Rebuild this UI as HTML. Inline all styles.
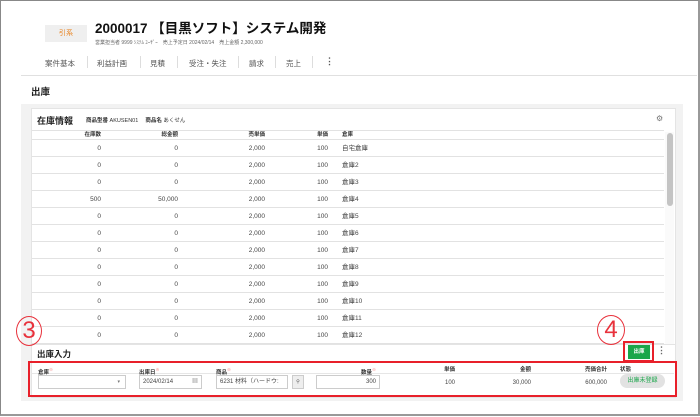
<!DOCTYPE html><html><head><meta charset="utf-8"><style>
*{margin:0;padding:0;box-sizing:border-box}
body{width:700px;height:417px;background:#fff;font-family:"Liberation Sans","Noto Sans CJK JP",sans-serif;color:#333;position:relative;overflow:hidden}
.a{position:absolute;white-space:nowrap}
.r{text-align:right}
.row{position:absolute;left:0;width:664px;height:17px;font-size:6.5px;color:#444}
.row:after{content:"";position:absolute;left:32px;right:0;bottom:0;height:1px;background:#e2e2e2}
.row span{position:absolute;top:5px;width:60px;white-space:nowrap;line-height:8px}
.hd span{position:absolute;top:1px;width:60px;white-space:nowrap;line-height:8px}
.circ{position:absolute;border:1.3px solid #e8323c;border-radius:50%;color:#e8323c;font-size:24px;text-align:center;font-family:"Liberation Sans",sans-serif;font-weight:300}
.lb{position:absolute;top:366px;font-size:5.5px;font-weight:bold;color:#333;white-space:nowrap;line-height:8px}
.lb sup{color:#e66;font-size:4px}
.v{position:absolute;top:379px;font-size:6px;color:#444;width:60px;text-align:right;line-height:8px}
.in{position:absolute;top:375px;height:14px;border:1px solid #ccc;font-size:6px;color:#444;line-height:12px;white-space:nowrap;overflow:hidden;background:#fff}
</style></head><body>
<div class="a" style="left:0;top:0;width:700px;height:416px;border:1px solid #888;border-right:2px solid #999;border-bottom:2px solid #999"></div>
<div class="a" style="left:45px;top:25px;width:42px;height:17px;background:#efefef;color:#e8821e;font-size:7px;text-align:center;line-height:17px">引系</div>
<div class="a" style="left:95px;top:17px;font-size:13.5px;font-weight:bold;color:#111">2000017 【目黒ソフト】システム開発</div>
<div class="a" style="left:95px;top:39px;font-size:5px;color:#666">営業担当者 9999 ｼｽﾃﾑ ﾕｰｻﾞｰ　売上予定日 2024/02/14　売上金額 2,300,000</div>
<div class="a" style="left:45px;top:58px;font-size:7.5px;color:#555">案件基本</div>
<div class="a" style="left:97px;top:58px;font-size:7.5px;color:#555">利益計画</div>
<div class="a" style="left:150px;top:58px;font-size:7.5px;color:#555">見積</div>
<div class="a" style="left:189px;top:58px;font-size:7.5px;color:#555">受注・失注</div>
<div class="a" style="left:249px;top:58px;font-size:7.5px;color:#555">請求</div>
<div class="a" style="left:286px;top:58px;font-size:7.5px;color:#555">売上</div>
<div class="a" style="left:325px;top:56px;font-size:9px;color:#555;font-weight:bold">⋮</div>
<div class="a" style="left:87px;top:56px;width:1px;height:12px;background:#ddd"></div>
<div class="a" style="left:140px;top:56px;width:1px;height:12px;background:#ddd"></div>
<div class="a" style="left:177px;top:56px;width:1px;height:12px;background:#ddd"></div>
<div class="a" style="left:238px;top:56px;width:1px;height:12px;background:#ddd"></div>
<div class="a" style="left:275px;top:56px;width:1px;height:12px;background:#ddd"></div>
<div class="a" style="left:312px;top:56px;width:1px;height:12px;background:#ddd"></div>
<div class="a" style="left:21px;top:75px;width:676px;height:1px;background:#e0e0e0"></div>
<div class="a" style="left:31px;top:84px;font-size:9.5px;font-weight:bold;color:#222">出庫</div>
<div class="a" style="left:21px;top:104px;width:662px;height:297px;background:#f2f2f2"></div>
<div class="a" style="left:31px;top:108px;width:645px;height:237px;background:#fff;border:1px solid #e4e4e4"></div>
<div class="a" style="left:37px;top:114px;font-size:9px;font-weight:bold;color:#222">在庫情報</div>
<div class="a" style="left:86px;top:116px;font-size:5.5px;color:#333"><b>商品型番</b> AKUSEN01　 <b>商品名</b> あくせん</div>
<div class="a" style="left:656px;top:114px;font-size:8px;color:#777">⚙</div>
<div class="a hd" style="left:0;top:130px;width:664px;height:10px;font-size:5.5px;font-weight:bold;color:#333">
<div class="a" style="left:32px;top:0;width:632px;height:10px;border-top:1px solid #e2e2e2;border-bottom:1px solid #e2e2e2"></div>
<span class="r" style="left:41px">在庫数</span><span class="r" style="left:118px">総金額</span><span class="r" style="left:205px">売単価</span><span class="r" style="left:268px">単価</span><span style="left:342px">倉庫</span></div>
<div class="a" style="left:665px;top:132px;width:9px;height:212px;background:#fafafa"></div>
<div class="a" style="left:667px;top:133px;width:6px;height:73px;background:#c4c4c4;border-radius:3px"></div>
<div id="rows"></div>
<script>
var d=[["0","0","自宅倉庫"],["0","0","倉庫2"],["0","0","倉庫3"],["500","50,000","倉庫4"]];
for(var i=5;i<=12;i++)d.push(["0","0","倉庫"+i]);
var h="";d.forEach(function(r,i){h+='<div class="row" style="top:'+(140+i*17)+'px"><span class="r" style="left:41px">'+r[0]+'</span><span class="r" style="left:118px">'+r[1]+'</span><span class="r" style="left:205px">2,000</span><span class="r" style="left:268px">100</span><span style="left:342px">'+r[2]+'</span></div>'});
document.getElementById("rows").innerHTML=h;
</script>
<div class="a" style="left:31px;top:344px;width:645px;height:54px;background:#fff;border:1px solid #e4e4e4"></div>
<div class="a" style="left:37px;top:348px;font-size:8.5px;font-weight:bold;color:#222">出庫入力</div>
<div class="a" style="left:628px;top:345px;width:22px;height:14px;background:#1aa64a;color:#fff;font-size:5.5px;text-align:center;line-height:14px;font-weight:bold">出庫</div>
<div class="a" style="left:623px;top:341px;width:31px;height:21px;border:2px solid #e8202a"></div>
<div class="a" style="left:657px;top:345px;font-size:9px;color:#666;font-weight:bold">⋮</div>
<div class="a" style="left:28px;top:361px;width:649px;height:36px;border:2.5px solid #e8202a"></div>
<div class="a" style="left:31px;top:373px;width:643px;height:1px;background:#e6e6e6"></div>
<span class="lb" style="left:38px">倉庫<sup>※</sup></span>
<span class="lb" style="left:139px">出庫日<sup>※</sup></span>
<span class="lb" style="left:216px">商品<sup>※</sup></span>
<span class="lb" style="left:361px">数量<sup>※</sup></span>
<span class="lb r" style="left:395px;width:60px">単価</span>
<span class="lb r" style="left:471px;width:60px">金額</span>
<span class="lb r" style="left:547px;width:60px">売価合計</span>
<span class="lb" style="left:620px">状態</span>
<div class="in" style="left:38px;width:88px;font-size:5px;color:#777;text-align:right;padding-right:5px">▾</div>
<div class="in" style="left:139px;width:63px;padding-left:3px">2024/02/14 <span style="float:right;margin-right:3px;color:#888">▦</span></div>
<div class="in" style="left:216px;width:72px;padding-left:3px">6231 材料（ハードウ:</div>
<div class="in" style="left:292px;width:12px;background:#eee;font-size:5px;text-align:center;color:#555">&#9906;</div>
<div class="in" style="left:316px;width:64px;text-align:right;padding-right:3px">300</div>
<span class="v" style="left:395px">100</span><span class="v" style="left:471px">30,000</span><span class="v" style="left:547px">600,000</span>
<div class="a" style="left:620px;top:374px;width:45px;height:14px;background:#e2e2e2;border-radius:7px;color:#1aa64a;font-size:6px;text-align:center;line-height:14px">出庫未登録</div>
<div class="circ" style="left:16px;top:316px;width:26px;height:30px;line-height:28px">3</div>
<div class="circ" style="left:597px;top:315px;width:28px;height:30px;line-height:28px">4</div>
</body></html>
